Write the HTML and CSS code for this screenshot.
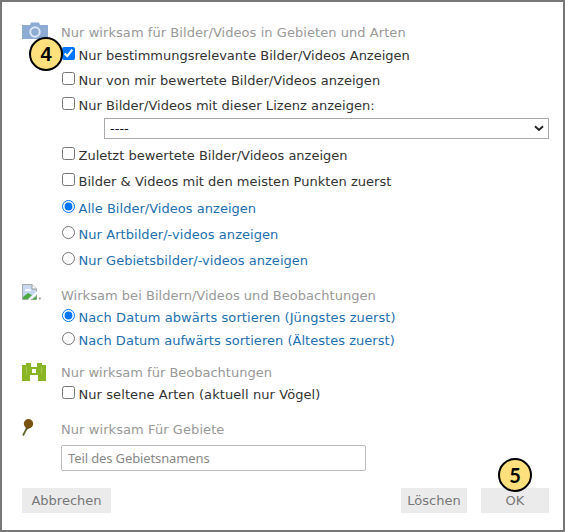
FILE: index.html
```
<!DOCTYPE html>
<html lang="de">
<head>
<meta charset="utf-8">
<title>Filter</title>
<link rel="stylesheet" href="styles.css">
</head>
<body>
<form class="dialog">
  <section class="group">
    <svg class="icon" width="27" height="18" viewBox="0 0 27 18"><path fill="#8dabd3" d="M0 3H8L9 .5H17L18 3H26V17H0Z"/><circle cx="13" cy="10" r="4.700" fill="#8dabd3" stroke="#dce7f5" stroke-width="2"/></svg>
    <div class="fields">
      <h2 class="wide">Nur wirksam für Bilder/Videos in Gebieten und Arten</h2>
      <label class="row r23"><input type="checkbox" checked><span>Nur bestimmungsrelevante Bilder/Videos Anzeigen</span></label>
      <label class="row r27"><input type="checkbox"><span class="slight">Nur von mir bewertete Bilder/Videos anzeigen</span></label>
      <label class="row r24"><input type="checkbox"><span class="slight">Nur Bilder/Videos mit dieser Lizenz anzeigen:</span></label>
      <div class="select"><span>----</span><svg width="10" height="7" viewBox="0 0 10 7"><path d="M1 1.300 5 5 9 1.300" fill="none" stroke="#222" stroke-width="2"/></svg></div>
      <label class="row r26"><input type="checkbox"><span>Zuletzt bewertete Bilder/Videos anzeigen</span></label>
      <label class="row r25"><input type="checkbox"><span class="slight">Bilder &amp; Videos mit den meisten Punkten zuerst</span></label>
      <div class="choices">
        <label class="row r26 link"><input type="radio" name="art" checked><span class="slight">Alle Bilder/Videos anzeigen</span></label>
        <label class="row r25 link"><input type="radio" name="art"><span class="wide">Nur Artbilder/-videos anzeigen</span></label>
        <label class="row r28 link"><input type="radio" name="art"><span class="slight">Nur Gebietsbilder/-videos anzeigen</span></label>
      </div>
    </div>
  </section>
  <section class="group sorting">
    <svg class="icon" width="22" height="18" viewBox="0 0 22 18"><path d="M.5 .5H10L14.500 5V15.500H.5Z" fill="#c6d7f2" stroke="#aaa"/><path d="M10 .5V5H14.500" fill="#fff" stroke="#999"/><path d="M3 7a2 2 0 0 1 3-2 2 2 0 0 1 3 2Z" fill="#fff"/><path d="M1 15v-2l5-4 4 2-4 4Z" fill="#4caa42"/><path d="M6 16 15 7v3l-7 6Z" fill="#fff"/><path d="M10 15.500h4.500V12Z" fill="#4caa42"/><circle cx="17.800" cy="14.500" r="1" fill="#888"/></svg>
    <div class="fields">
      <h2 class="slight">Wirksam bei Bildern/Videos und Beobachtungen</h2>
      <label class="row link"><input type="radio" name="datum" checked><span class="wider">Nach Datum abwärts sortieren (Jüngstes zuerst)</span></label>
      <label class="row r24 link"><input type="radio" name="datum"><span class="slight">Nach Datum aufwärts sortieren (Ältestes zuerst)</span></label>
    </div>
  </section>
  <section class="group sightings">
    <svg class="icon" width="25" height="20" viewBox="0 0 25 20"><path fill="#8ab526" fill-rule="evenodd" d="M4 2H9V6H15V2H20V4H24V20H16V14H8V20H0V4H4ZM10 8V12H14V8Z"/><path fill="#b5d268" d="M4 6h.7v7H4ZM19.300 6h.7v7h-.7Z"/></svg>
    <div class="fields">
      <h2>Nur wirksam für Beobachtungen</h2>
      <label class="row"><input type="checkbox"><span class="wider">Nur seltene Arten (aktuell nur Vögel)</span></label>
    </div>
  </section>
  <section class="group areas">
    <svg class="icon" width="14" height="19" viewBox="0 0 14 19"><path d="M6 8 1 17.500" stroke="#64672f" stroke-width="1.800"/><circle cx="6.500" cy="5.800" r="4.700" fill="#795411"/><path d="M3.500 9h5l-4 3Z" fill="#68501e"/></svg>
    <div class="fields">
      <h2 class="wider">Nur wirksam Für Gebiete</h2>
      <input class="text" type="text" placeholder="Teil des Gebietsnamens">
    </div>
  </section>
  <footer class="actions">
    <button type="button" class="cancel">Abbrechen</button>
    <button type="button" class="clear">Löschen</button>
    <button type="button" class="ok">OK</button>
  </footer>
  <span class="step step-four">4</span>
  <span class="step step-five">5</span>
</form>
</body>
</html>
```
FILE: styles.css
```
* { box-sizing: border-box; }
body { margin: 0; background: #fff; font: 13px/18px Verdana, "DejaVu Sans", sans-serif; color: #333; }
.dialog { position: relative; width: 565px; height: 532px; border: 2px solid #777; padding: 20px 13px 0 20px; background: #fff; }
.group { display: grid; grid-template-columns: 39px 1fr; align-items: start; }
.icon { display: block; }
.fields { min-width: 0; }
h2 { margin: 0; font-size: 13px; font-weight: normal; line-height: 22px; color: #999; white-space: nowrap; }
.slight { letter-spacing: .03px; }
.wide { letter-spacing: .06px; }
.wider { letter-spacing: .08px; }
.row { display: flex; align-items: center; height: 22px; white-space: nowrap; }
.row input { width: 13px; height: 13px; margin: 0 3.500px 5px 1px; flex: none; }
.r23 { height: 23px; }
.r24 { height: 24px; }
.r25 { height: 25px; }
.r26 { height: 26px; }
.r27 { height: 27px; }
.r28 { height: 28px; }
.link { color: #2270b0; }
.select { display: flex; align-items: center; justify-content: space-between; height: 21px; margin: 0 1px 4px 43px; padding: 0 4px 0 5px; border: 1px solid #aaa; color: #111; }
.choices { margin-top: 2px; }
.sorting { margin-top: 9px; }
.sorting .fields, .sightings .fields, .areas .fields { padding-top: 1px; }
.sightings { margin-top: 8px; }
.areas { margin-top: 12px; }
.text { display: block; width: 305px; height: 26px; margin-top: 4px; padding: 0 6px; border: 1px solid #bbb; border-radius: 2px; font: 13px "Noto Sans", sans-serif; letter-spacing: -.12px; }
.text::placeholder { color: #888; }
.actions { display: flex; height: 25px; margin-top: 17px; }
.actions button { height: 25px; border: 0; padding: 0; background: #ebebeb; color: #777; font: 13px "DejaVu Sans", sans-serif; }
.cancel { width: 89px; margin-right: auto; }
.clear { width: 66px; }
.ok { width: 68px; margin: 0 1px 0 14px; }
.step { position: absolute; display: flex; align-items: center; justify-content: center; width: 34px; height: 34px; border: 2px solid #000; border-radius: 50%; background: #ffe07d; color: #000; font: bold 20px/1 "Liberation Sans", sans-serif; }
.step-four { left: 27px; top: 35px; }
.step-five { left: 496px; top: 456px; font: bold 20px/1 Lato, sans-serif; }
```
